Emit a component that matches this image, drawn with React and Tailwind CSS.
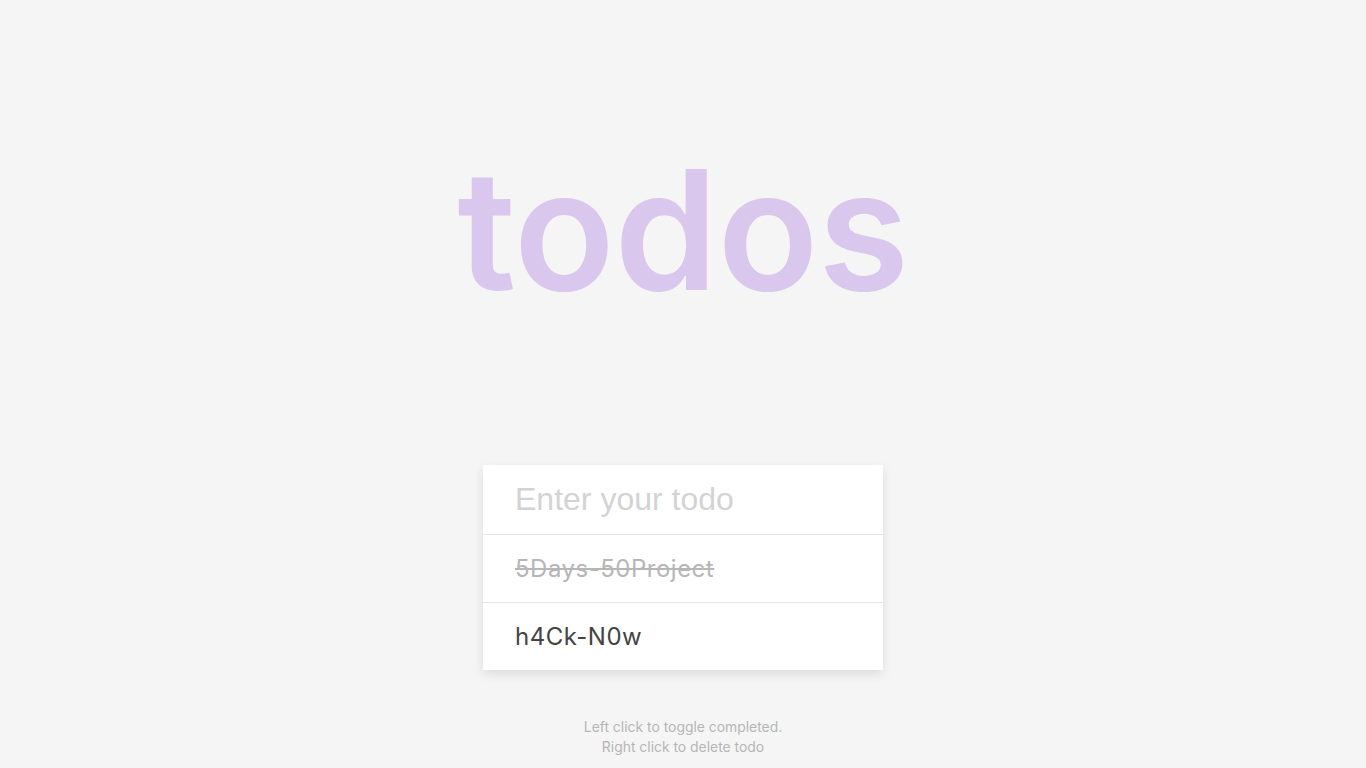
export default function App() {
  const todos = [
    { text: '5Days-50Project', completed: true },
    { text: 'h4Ck-N0w', completed: false },
  ];

  return (
    <div className="min-h-screen bg-[#f5f5f5] flex flex-col items-center font-['Inter',sans-serif]">
      <h1 className="mt-[147px] text-[166px] leading-none font-semibold tracking-[-0.5px] text-[#dac7ed] select-none">
        todos
      </h1>

      <form className="mt-[152px] w-[400px] shadow-[0_4px_10px_rgba(0,0,0,0.1)]">
        <input
          type="text"
          placeholder="Enter your todo"
          className="block w-full border-0 outline-none bg-white px-8 py-4 h-[69px] text-[32px] text-[#444] font-['Liberation_Sans',Arial,sans-serif] placeholder:text-[#d3d3d3]"
        />
        <ul className="bg-white list-none m-0 p-0">
          {todos.map((t) => (
            <li
              key={t.text}
              className={`border-t border-[#e5e5e5] cursor-pointer px-8 h-[68px] flex items-center text-[24px] tracking-[0.5px] ${
                t.completed ? 'text-[#b6b6b6] line-through' : 'text-[#444]'
              }`}
            >
              {t.text}
            </li>
          ))}
        </ul>
      </form>

      <small className="mt-[47px] text-center text-[13.9px] leading-5 text-[#b5b5b5]">
        Left click to toggle completed.
        <br />
        Right click to delete todo
      </small>
    </div>
  );
}
